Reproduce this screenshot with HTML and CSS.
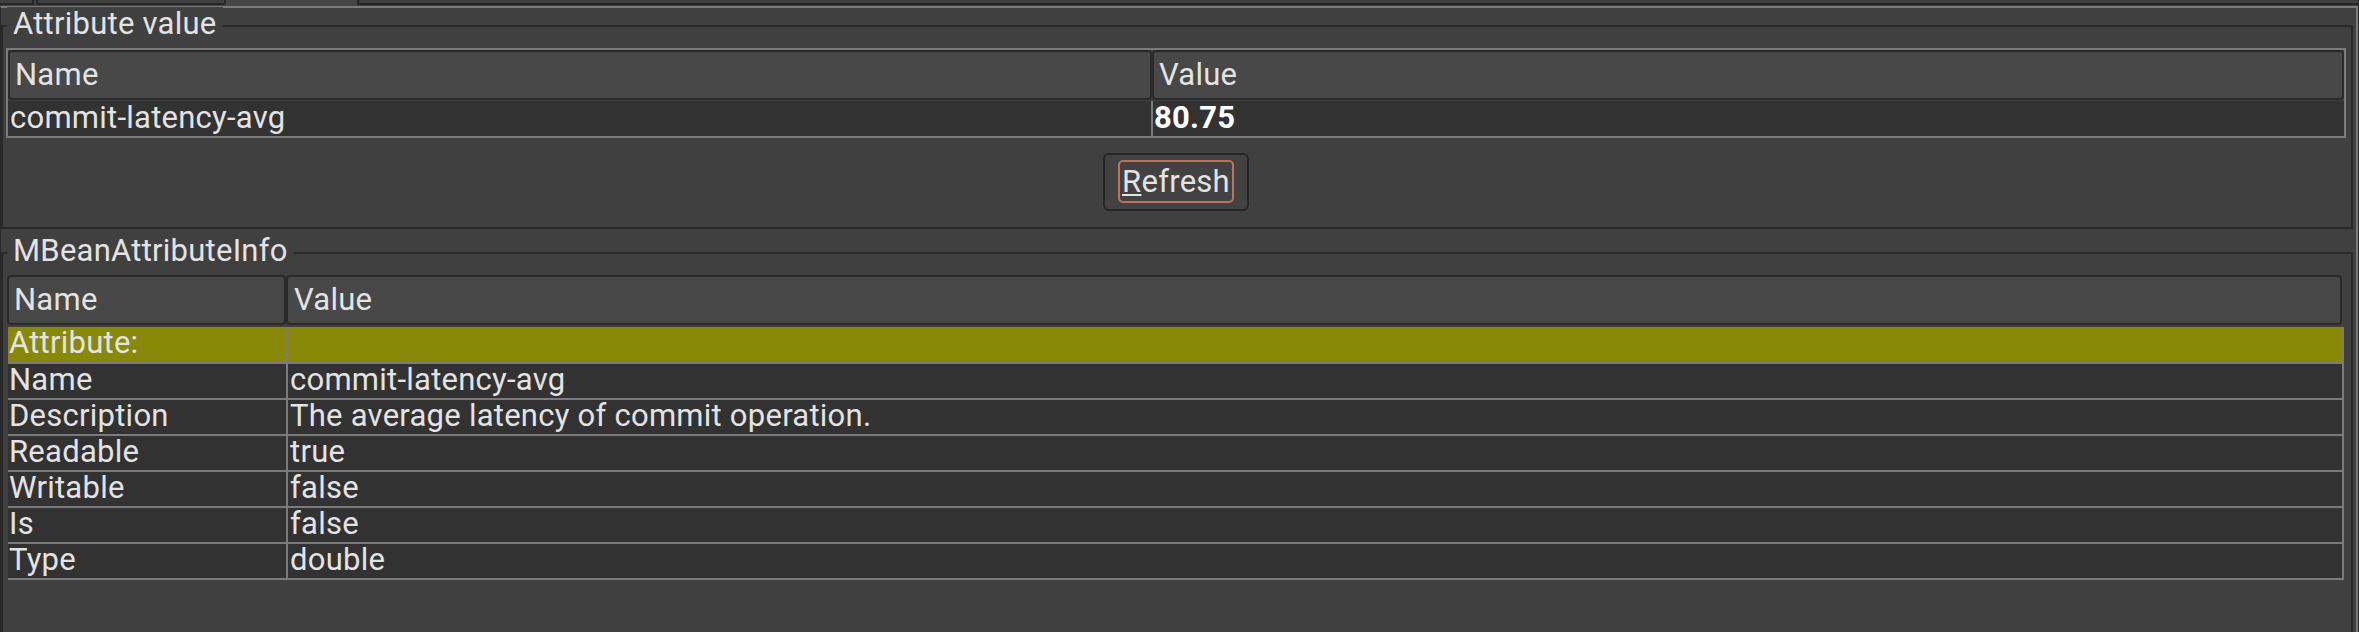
FILE: index.html
```html
<!DOCTYPE html>
<html lang="en">
<head>
<meta charset="utf-8">
<title>MBean attribute</title>
<link rel="stylesheet" href="styles.css">
</head>
<body>
<div class="window">
  <div class="tabs">
    <div class="tab tab-a"></div>
    <div class="tab tab-b"></div>
    <div class="tab tab-sel"></div>
    <div class="tab tab-rest"></div>
  </div>
  <div class="pane">
    <section class="group group-value">
      <h2 class="group-title">Attribute value</h2>
      <div class="scroll">
        <div class="thead">
          <div class="th v-c1">Name</div>
          <div class="th v-c2">Value</div>
        </div>
        <div class="vrow">
          <div class="td v-c1">commit-latency-avg</div>
          <div class="td v-c2 strong">80.75</div>
        </div>
      </div>
      <div class="actions">
        <button class="btn" type="button"><span class="focus"><u>R</u>efresh</span></button>
      </div>
    </section>
    <section class="group group-info">
      <h2 class="group-title">MBeanAttributeInfo</h2>
      <div class="info-table">
        <div class="thead info-head">
          <div class="th i-c1">Name</div>
          <div class="th i-c2">Value</div>
        </div>
        <div class="irow highlight">
          <div class="cell i-c1">Attribute:</div>
          <div class="cell i-c2"></div>
        </div>
        <div class="irow">
          <div class="cell i-c1">Name</div>
          <div class="cell i-c2">commit-latency-avg</div>
        </div>
        <div class="irow">
          <div class="cell i-c1">Description</div>
          <div class="cell i-c2">The average latency of commit operation.</div>
        </div>
        <div class="irow">
          <div class="cell i-c1">Readable</div>
          <div class="cell i-c2">true</div>
        </div>
        <div class="irow">
          <div class="cell i-c1">Writable</div>
          <div class="cell i-c2">false</div>
        </div>
        <div class="irow">
          <div class="cell i-c1">Is</div>
          <div class="cell i-c2">false</div>
        </div>
        <div class="irow">
          <div class="cell i-c1">Type</div>
          <div class="cell i-c2">double</div>
        </div>
      </div>
    </section>
  </div>
</div>
</body>
</html>
```
FILE: styles.css
```css
* {
  box-sizing: border-box;
  margin: 0;
  padding: 0;
}

html, body {
  height: 100%;
}

body {
  background: #404040;
  color: #e3e3e3;
  font-family: Roboto, "Open Sans", sans-serif;
  font-size: 31px;
  letter-spacing: 0.25px;
  overflow: hidden;
}

.window {
  height: 632px;
  display: flex;
  flex-direction: column;
  border-right: 1px solid #2a2a2a;
  overflow: hidden;
}

/* tab strip remnants */
.tabs {
  flex: none;
  height: 6px;
  display: flex;
  align-items: flex-start;
}

.tab {
  height: 5px;
}

.tab-a {
  width: 34px;
  border-right: 2px solid #262626;
  border-bottom: 2px solid #262626;
}

.tab-b {
  width: 190px;
  margin-left: 2px;
  border: 2px solid #262626;
  border-top: 0;
  border-radius: 0 0 3px 3px;
}

.tab-sel {
  width: 131px;
  height: 6px;
  background: #464646;
}

.tab-rest {
  flex: 1;
  border-left: 2px solid #262626;
  border-bottom: 2px solid #262626;
}

.pane {
  flex: 1;
  display: flex;
  flex-direction: column;
  gap: 23px;
  border-top: 2px solid #7b7b7b;
  border-right: 2px solid #7b7b7b;
  border-left: 1px solid #2a2a2a;
  padding: 17px 3px 0 0;
}

.group {
  position: relative;
  flex: none;
  border: 2px solid #2a2a2a;
}

.group-value {
  padding: 21px 5px 16px 3px;
}

.group-info {
  height: 420px;
  padding: 21px 7px 0 4px;
}

.group-title {
  position: absolute;
  top: -20px;
  left: 4px;
  padding: 0 6px;
  background: #404040;
  font-size: 31px;
  font-weight: normal;
  line-height: 34px;
}

/* attribute value table */
.scroll {
  border: 2px solid #7b7b7b;
}

.thead {
  display: flex;
  height: 50px;
}

.th {
  height: 50px;
  display: flex;
  align-items: center;
  line-height: 34px;
  padding-left: 5px;
  background: #484848;
  border: 2px solid #2a2a2a;
  border-radius: 4px;
}

.v-c1 {
  width: 1144px;
  flex: none;
}

.v-c2 {
  flex: 1;
}

.vrow {
  display: flex;
  height: 35px;
  margin-top: 1px;
  background: #323232;
}

.td {
  line-height: 33px;
  white-space: nowrap;
}

.vrow .v-c1 {
  width: 1145px;
  padding-left: 2px;
  border-right: 2px solid #7b7b7b;
}

.vrow .v-c2 {
  padding-left: 1px;
}

.strong {
  font-weight: bold;
  color: #ffffff;
}

.actions {
  display: flex;
  justify-content: center;
  margin-top: 15px;
}

.btn {
  width: 146px;
  height: 58px;
  padding: 5px 13px 6px;
  display: flex;
  background: #424242;
  border: 2px solid #262626;
  border-radius: 6px;
  font: inherit;
  color: inherit;
  letter-spacing: inherit;
}

.focus {
  flex: 1;
  border: 2px solid #c0715a;
  border-radius: 5px;
  line-height: 39px;
  text-align: center;
  white-space: nowrap;
}

.focus u {
  text-decoration-thickness: 2px;
  text-underline-offset: 2px;
}

/* attribute info table */
.info-table {
  width: 2337px;
}

.info-head {
  width: 2335px;
  margin-bottom: 2px;
}

.info-head .i-c1 {
  width: 279px;
  flex: none;
}

.info-head .i-c2 {
  flex: 1;
  padding-left: 6px;
}

.irow {
  display: flex;
  height: 36px;
  margin-left: 1px;
  background: #323232;
  border-bottom: 2px solid #7b7b7b;
}

.irow.highlight {
  height: 37px;
  background: #898909;
}

.cell {
  line-height: 31px;
  white-space: nowrap;
  border-right: 2px solid #7b7b7b;
}

.irow .i-c1 {
  width: 280px;
  flex: none;
  padding-left: 1px;
}

.irow .i-c2 {
  flex: 1;
  padding-left: 2px;
}
```
